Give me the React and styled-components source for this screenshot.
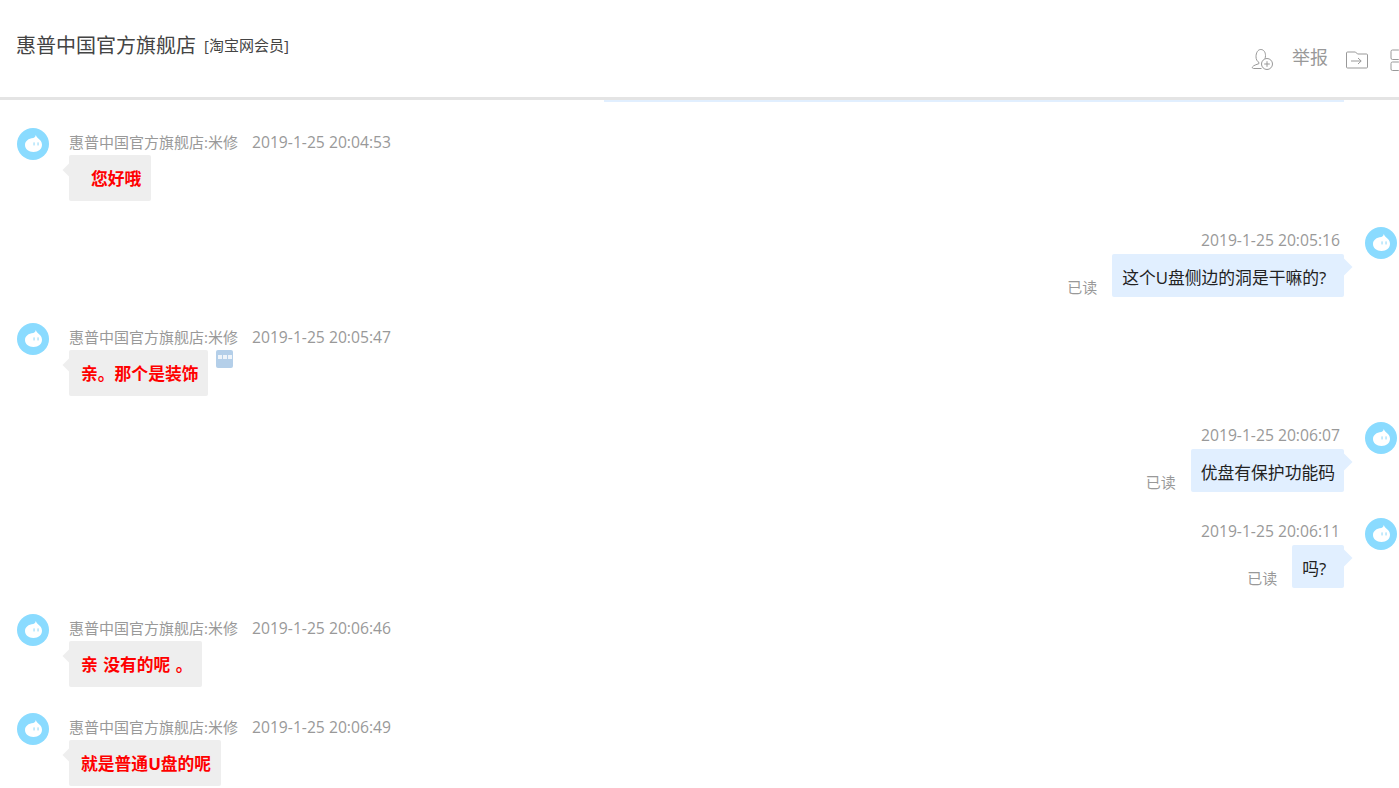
import React from "react";
import styled, { createGlobalStyle } from "styled-components";

const messages = [
  { id: 1, side: "left", time: "2019-1-25 20:04:53", text: "您好哦", indent: true },
  { id: 2, side: "right", time: "2019-1-25 20:05:16", text: "这个U盘侧边的洞是干嘛的?\u00a0\u00a0" },
  { id: 3, side: "left", time: "2019-1-25 20:05:47", text: "亲。那个是装饰", more: true },
  { id: 4, side: "right", time: "2019-1-25 20:06:07", text: "优盘有保护功能码" },
  { id: 5, side: "right", time: "2019-1-25 20:06:11", text: "吗?\u00a0\u00a0" },
  { id: 6, side: "left", time: "2019-1-25 20:06:46", text: "亲 没有的呢 。" },
  { id: 7, side: "left", time: "2019-1-25 20:06:49", text: "就是普通U盘的呢" },
];

const Avatar = () => (
  <AvatarBox viewBox="0 0 32 32">
    <circle cx="16" cy="16" r="16" fill="#8adbff" />
    <path
      d="M18.800 6.800c-.2 1.700-.9 2.700-2.500 3.300C11.500 10.500 8 13.200 8 17c0 4 3.600 7 8.500 7s8.500-3 8.500-7.200c0-2.800-1.800-4.800-3.700-6.200-1.100-.9-2-2.200-2.500-3.800z"
      fill="#fff"
    />
    <rect x="16.400" y="14.200" width="1.300" height="3.400" rx=".6" fill="#a6e0fa" />
    <rect x="20.400" y="14.200" width="1.300" height="3.400" rx=".6" fill="#a6e0fa" />
  </AvatarBox>
);

const App = () => {
  return (
    <Page>
      <GlobalStyle />
      <Header>
        <ShopName>惠普中国官方旗舰店</ShopName>
        <MemberTag>[淘宝网会员]</MemberTag>
        <Toolbar>
          <ToolIcon width="24" height="24" viewBox="0 0 24 24">
            <path d="M9 15.500c-1.800-1-3-3.200-3-5.700C6 5.800 7.800 2.500 10.800 2.500s4.700 2.800 4.700 6c0 1.200-.2 2.300-.5 3.200M8.900 15.400v1.300c-2.400.8-5.400 1.700-6.400 3.200-.5.800 0 1.600 1 1.600h8" />
            <circle cx="17" cy="17" r="5.500" />
            <path d="M17 14.200v5.600M14.200 17h5.600" />
          </ToolIcon>
          <ReportLink>举报</ReportLink>
          <ToolIcon width="24" height="24" viewBox="0 0 24 24">
            <path d="M2.500 5h8l2 2h9a1 1 0 0 1 1 1v12a1 1 0 0 1-1 1h-19a1 1 0 0 1-1-1V6a1 1 0 0 1 1-1z" />
            <path d="M6 14h10M13 11l3.200 3-3.200 3" />
          </ToolIcon>
          <ToolIcon width="24" height="24" viewBox="0 0 24 24">
            <rect x="2" y="3" width="9" height="9.500" rx="1.500" />
            <rect x="2" y="15" width="9" height="8.500" rx="1.500" />
            <rect x="14" y="3" width="9" height="9.500" rx="1.500" />
            <rect x="14" y="15" width="9" height="8.500" rx="1.500" />
          </ToolIcon>
        </Toolbar>
      </Header>
      <ClippedBubble />
      <MessageList>
        {messages.map((msg) => (
          <Row key={msg.id} $side={msg.side}>
            <Avatar />
            <Body $side={msg.side}>
              {msg.side === "left" ? (
                <Meta>
                  <span>惠普中国官方旗舰店:米修</span>
                  <Time>{msg.time}</Time>
                </Meta>
              ) : (
                <Meta $side="right">
                  <Time>{msg.time}</Time>
                </Meta>
              )}
              <BubbleLine>
                {msg.side === "right" && <ReadMark>已读</ReadMark>}
                <Bubble $side={msg.side} $indent={msg.indent}>
                  {msg.text}
                </Bubble>
                {msg.more && (
                  <MoreButton>
                    <i />
                    <i />
                    <i />
                  </MoreButton>
                )}
              </BubbleLine>
            </Body>
          </Row>
        ))}
      </MessageList>
    </Page>
  );
};

export default App;

const GlobalStyle = createGlobalStyle`
  html, body {
    margin: 0;
    padding: 0;
    background: #fff;
  }
  body {
    font-family: "Open Sans", "Noto Sans CJK SC", sans-serif;
  }
`;

const Page = styled.div`
  height: 788px;
  overflow: hidden;
  background: #fff;
`;

const Header = styled.div`
  height: 97px;
  box-sizing: content-box;
  border-bottom: 3px solid #e4e4e4;
  display: flex;
  align-items: flex-start;
  padding-left: 16px;
  overflow: hidden;
  color: #444;
`;

const ShopName = styled.div`
  font-size: 20px;
  line-height: 28px;
  margin-top: 32px;
`;

const MemberTag = styled.div`
  font-size: 15px;
  line-height: 20px;
  margin: 35px 0 0 8px;
`;

const Toolbar = styled.div`
  display: flex;
  align-items: center;
  margin-left: auto;
  margin-right: -14px;
  margin-top: 47px;
  color: #999;
`;

const ToolIcon = styled.svg`
  flex: none;
  fill: none;
  stroke: #999;
  stroke-width: 1;
  overflow: visible;
  & + & {
    margin-left: 20px;
  }
`;

const ReportLink = styled.span`
  font-size: 18px;
  line-height: 24px;
  margin: -4px 17px 0 18px;
  color: #999;
`;

const ClippedBubble = styled.div`
  height: 2px;
  margin: 0 55px 0 604px;
  background: #e1efff;
`;

const MessageList = styled.div`
  padding-top: 26px;
`;

const Row = styled.div`
  display: flex;
  flex-direction: ${(p) => (p.$side === "right" ? "row-reverse" : "row")};
  align-items: flex-start;
  gap: ${(p) => (p.$side === "right" ? "21px" : "20px")};
  padding: ${(p) => (p.$side === "right" ? "0 2px 0 0" : "0 0 0 17px")};
  margin-bottom: 26px;
`;

const AvatarBox = styled.svg`
  flex: none;
  width: 32px;
  height: 32px;
`;

const Body = styled.div`
  display: flex;
  flex-direction: column;
  align-items: ${(p) => (p.$side === "right" ? "flex-end" : "flex-start")};
`;

const Meta = styled.div`
  display: flex;
  gap: 14px;
  height: 27px;
  font-size: 15px;
  line-height: ${(p) => (p.$side === "right" ? "26px" : "28px")};
  color: #999;
  white-space: nowrap;
  margin-right: ${(p) => (p.$side === "right" ? "4px" : "0")};
`;

const Time = styled.span`
  font-size: 15.7px;
`;

const BubbleLine = styled.div`
  display: flex;
  align-items: flex-start;
`;

const Bubble = styled.div`
  position: relative;
  font-size: 16.8px;
  border-radius: 2px;
  white-space: nowrap;
  line-height: 26px;
  ${(p) =>
    p.$side === "right"
      ? `
    padding: 11px 9px 6px 10px;
    background: #e1efff;
    color: #222;
  `
      : `
    padding: 11px 10px 9px ${p.$indent ? "22px" : "12px"};
    background: #eeeeee;
    color: #ff0000;
    font-weight: 700;
    word-spacing: 1px;
  `}
  &::after {
    content: "";
    position: absolute;
    width: 12px;
    height: 12px;
    background: inherit;
    transform: rotate(45deg);
    top: ${(p) => (p.$side === "right" ? "7px" : "9px")};
    ${(p) => (p.$side === "right" ? "right: -6px;" : "left: -4px;")}
    z-index: 0;
  }
`;

const ReadMark = styled.span`
  font-size: 15px;
  line-height: 20px;
  color: #999;
  margin: 23px 15px 0 0;
`;

const MoreButton = styled.div`
  display: flex;
  align-items: flex-start;
  justify-content: center;
  gap: 1px;
  width: 17px;
  height: 18px;
  box-sizing: border-box;
  padding-top: 5px;
  margin-left: 8px;
  border-radius: 2px;
  background: #b4cfe9;
  i {
    width: 4px;
    height: 4px;
    background: #eef4fa;
  }
`;
